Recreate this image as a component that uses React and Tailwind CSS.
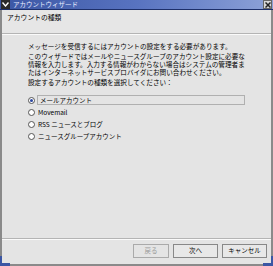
export default function App() {
  const jp = { fontFamily: '"Noto Sans CJK JP", "DejaVu Sans", sans-serif' };
  return (
    <div className="w-[273px] h-[266px] bg-[#e4e4e4] flex flex-col relative overflow-hidden text-[6.6px] text-black whitespace-nowrap" style={jp}>
      {/* title bar */}
      <div className="h-[10px] flex items-center bg-gradient-to-r from-[#3b56a4] via-[#5873c0] to-[#8ea2d8] border-b border-[#1d2f6a]">
        <div className="w-[9px] h-[9px] bg-[#2a2a2a] flex items-center justify-center ml-[1px]">
          <svg width="7" height="5" viewBox="0 0 7 5"><path d="M0.5 0.5 L3.5 4 L6.5 0.5" stroke="#fff" strokeWidth="1.4" fill="none" /></svg>
        </div>
        <div className="ml-[3px] text-[6.5px] leading-[9px] text-[#e8ecff] flex-1">アカウントウィザード</div>
        <div className="w-[9px] h-[9px] bg-[#d8d8d8] border border-[#666] flex items-center justify-center mr-[1px]">
          <svg width="6" height="6" viewBox="0 0 6 6"><path d="M0.5 0.5 L5.5 5.5 M5.5 0.5 L0.5 5.5" stroke="#222" strokeWidth="1.5" /></svg>
        </div>
      </div>
      <div className="flex-1 flex border-l-[2px] border-r-[2px] border-b-[2px] border-[#8a8a8a]">
        <div className="flex-1 flex flex-col">
          {/* header */}
          <div className="h-[23px] pl-[5px] pt-[2px] leading-[10px] text-[6.8px] bg-[#e6e6e6]">アカウントの種類</div>
          <div className="h-[1px] bg-[#b4b4b4]" />
          <div className="h-[1px] bg-[#fafafa]" />
          {/* content */}
          <div className="flex-1 flex flex-col pl-[26px] pr-[4px] pt-[7px]">
            <div className="h-[8px] leading-[8px]">メッセージを受信するにはアカウントの設定をする必要があります。</div>
            <div className="mt-[2px] h-[8px] leading-[8px]">このウィザードではメールやニュースグループのアカウント設定に必要な</div>
            <div className="h-[8px] leading-[8px]">情報を入力します。入力する情報がわからない場合はシステムの管理者ま</div>
            <div className="h-[8px] leading-[8px]">たはインターネットサービスプロバイダにお問い合わせください。</div>
            <div className="mt-[2px] h-[8px] leading-[8px]">設定するアカウントの種類を選択してください：</div>
            <div className="mt-[9px] flex flex-col gap-[2px] text-[6.5px]">
              {[
                'メールアカウント',
                'Movemail',
                'RSS ニュースとブログ',
                'ニュースグループアカウント',
              ].map((t, i) => (
                <div key={t} className="flex items-center h-[10px]">
                  <div className="w-[7px] h-[7px] rounded-full border border-[#555] bg-white flex items-center justify-center">
                    {i === 0 && <div className="w-[3px] h-[3px] rounded-full bg-[#2a46a0]" />}
                  </div>
                  <div className={i === 0 ? 'ml-[2px] pl-[2px] w-[208px] h-[10px] leading-[8px] border border-[#b0b0b0]' : 'ml-[3px] leading-[9px]'}>{t}</div>
                </div>
              ))}
            </div>
          </div>
          {/* footer */}
          <div className="h-[1px] bg-[#b4b4b4]" />
          <div className="h-[1px] bg-[#fafafa]" />
          <div className="h-[24px] flex items-start justify-end gap-[4px] pr-[4px] pt-[4px] text-[6.5px]">
            <div className="w-[36px] h-[14px] border border-[#aaa] bg-[#e4e4e4] text-[#999] flex items-center justify-center">戻る</div>
            <div className="w-[45px] h-[14px] border border-[#888] bg-[#e8e8e8] flex items-center justify-center">次へ</div>
            <div className="w-[45px] h-[14px] border border-[#888] bg-[#e8e8e8] flex items-center justify-center">キャンセル</div>
          </div>
        </div>
      </div>
      <div className="absolute left-0 bottom-0 w-[10px] h-[3px] bg-[#3b56a4]" />
      <div className="absolute left-0 bottom-0 w-[2px] h-[10px] bg-[#3b56a4]" />
      <div className="absolute right-0 bottom-0 w-[10px] h-[3px] bg-[#3b56a4]" />
      <div className="absolute right-0 bottom-0 w-[2px] h-[10px] bg-[#3b56a4]" />
    </div>
  );
}
